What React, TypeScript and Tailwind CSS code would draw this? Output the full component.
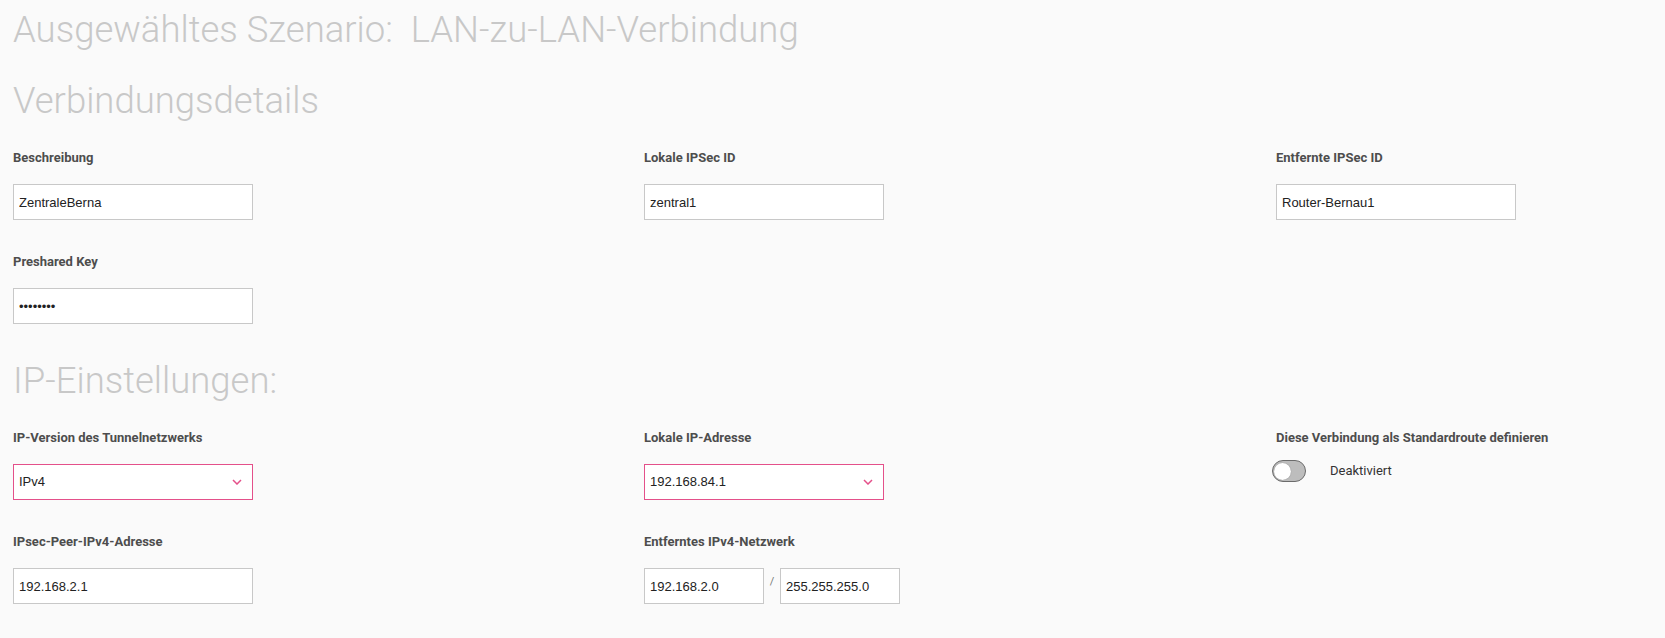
import React from "react";

const labelCls =
  "block text-[13px] leading-[16px] font-bold text-[#4d4d4d] mb-[18px] whitespace-nowrap";
const inputCls =
  "h-[36px] border border-[#c8c8c8] bg-white pl-[5px] text-[13px] text-[#222] outline-none";
const fontInput = { fontFamily: '"Liberation Sans", Arial, sans-serif' };

const TextField = ({ label, value, type = "text" }: { label: string; value: string; type?: string }) => (
  <div>
    <label className={labelCls}>{label}</label>
    <input
      type={type}
      defaultValue={value}
      readOnly
      style={fontInput}
      className={`${inputCls} w-[240px]`}
    />
  </div>
);

const SelectField = ({ label, value }: { label: string; value: string }) => (
  <div>
    <label className={labelCls}>{label}</label>
    <div
      style={fontInput}
      className="h-[36px] w-[240px] border border-[#e4508a] bg-white pl-[5px] pr-[10px] flex items-center justify-between text-[13px] text-[#222]"
    >
      <span>{value}</span>
      <svg width="10" height="6" viewBox="0 0 10 6" fill="none">
        <polyline points="1,1 5,5 9,1" stroke="#e4508a" strokeWidth="1.5" />
      </svg>
    </div>
  </div>
);

const Toggle = ({ label, stateText }: { label: string; stateText: string }) => (
  <div>
    <label className={`${labelCls} !mb-[14px]`}>{label}</label>
    <div className="flex items-center gap-[24px] -ml-[4px]">
      <div className="w-[34px] h-[22px] rounded-full border-[1.5px] border-[#6b6b6b] bg-[#bdbdbd] flex items-center pl-[1px]">
        <div className="w-[17px] h-[17px] rounded-full bg-white shadow-[0_0_1px_rgba(0,0,0,0.4)]" />
      </div>
      <span className="text-[13px] text-[#333]">{stateText}</span>
    </div>
  </div>
);

export default function App() {
  return (
    <div
      className="min-h-screen bg-[#fafafa] pl-[13px] pt-[8px]"
      style={{ fontFamily: "Roboto, 'Noto Sans', sans-serif" }}
    >
      <h1 className="text-[36.5px] leading-[44px] font-light text-[#c8c8c8] whitespace-pre">
        {"Ausgewähltes Szenario:  LAN-zu-LAN-Verbindung"}
      </h1>

      <h2 className="mt-[27px] text-[36.5px] leading-[44px] font-light text-[#c8c8c8]">
        Verbindungsdetails
      </h2>

      <div className="mt-[27px] grid grid-cols-[631px_632px_1fr] gap-y-[34px]">
        <TextField label="Beschreibung" value="ZentraleBerna" />
        <TextField label="Lokale IPSec ID" value="zentral1" />
        <TextField label="Entfernte IPSec ID" value="Router-Bernau1" />
        <TextField label="Preshared Key" value="12345678" type="password" />
      </div>

      <h2 className="mt-[35px] text-[36.5px] leading-[44px] font-light text-[#c8c8c8]">
        IP-Einstellungen:
      </h2>

      <div className="mt-[27px] grid grid-cols-[631px_632px_1fr] gap-y-[34px] pb-[34px]">
        <SelectField label="IP-Version des Tunnelnetzwerks" value="IPv4" />
        <SelectField label="Lokale IP-Adresse" value="192.168.84.1" />
        <Toggle label="Diese Verbindung als Standardroute definieren" stateText="Deaktiviert" />

        <TextField label="IPsec-Peer-IPv4-Adresse" value="192.168.2.1" />
        <div>
          <label className={labelCls}>Entferntes IPv4-Netzwerk</label>
          <div className="flex items-start">
            <input
              type="text"
              defaultValue="192.168.2.0"
              readOnly
              style={fontInput}
              className={`${inputCls} w-[120px]`}
            />
            <span className="w-[16px] text-center text-[11px] leading-[11px] mt-[8px] text-[#777]">/</span>
            <input
              type="text"
              defaultValue="255.255.255.0"
              readOnly
              style={fontInput}
              className={`${inputCls} w-[120px]`}
            />
          </div>
        </div>
      </div>
    </div>
  );
}
